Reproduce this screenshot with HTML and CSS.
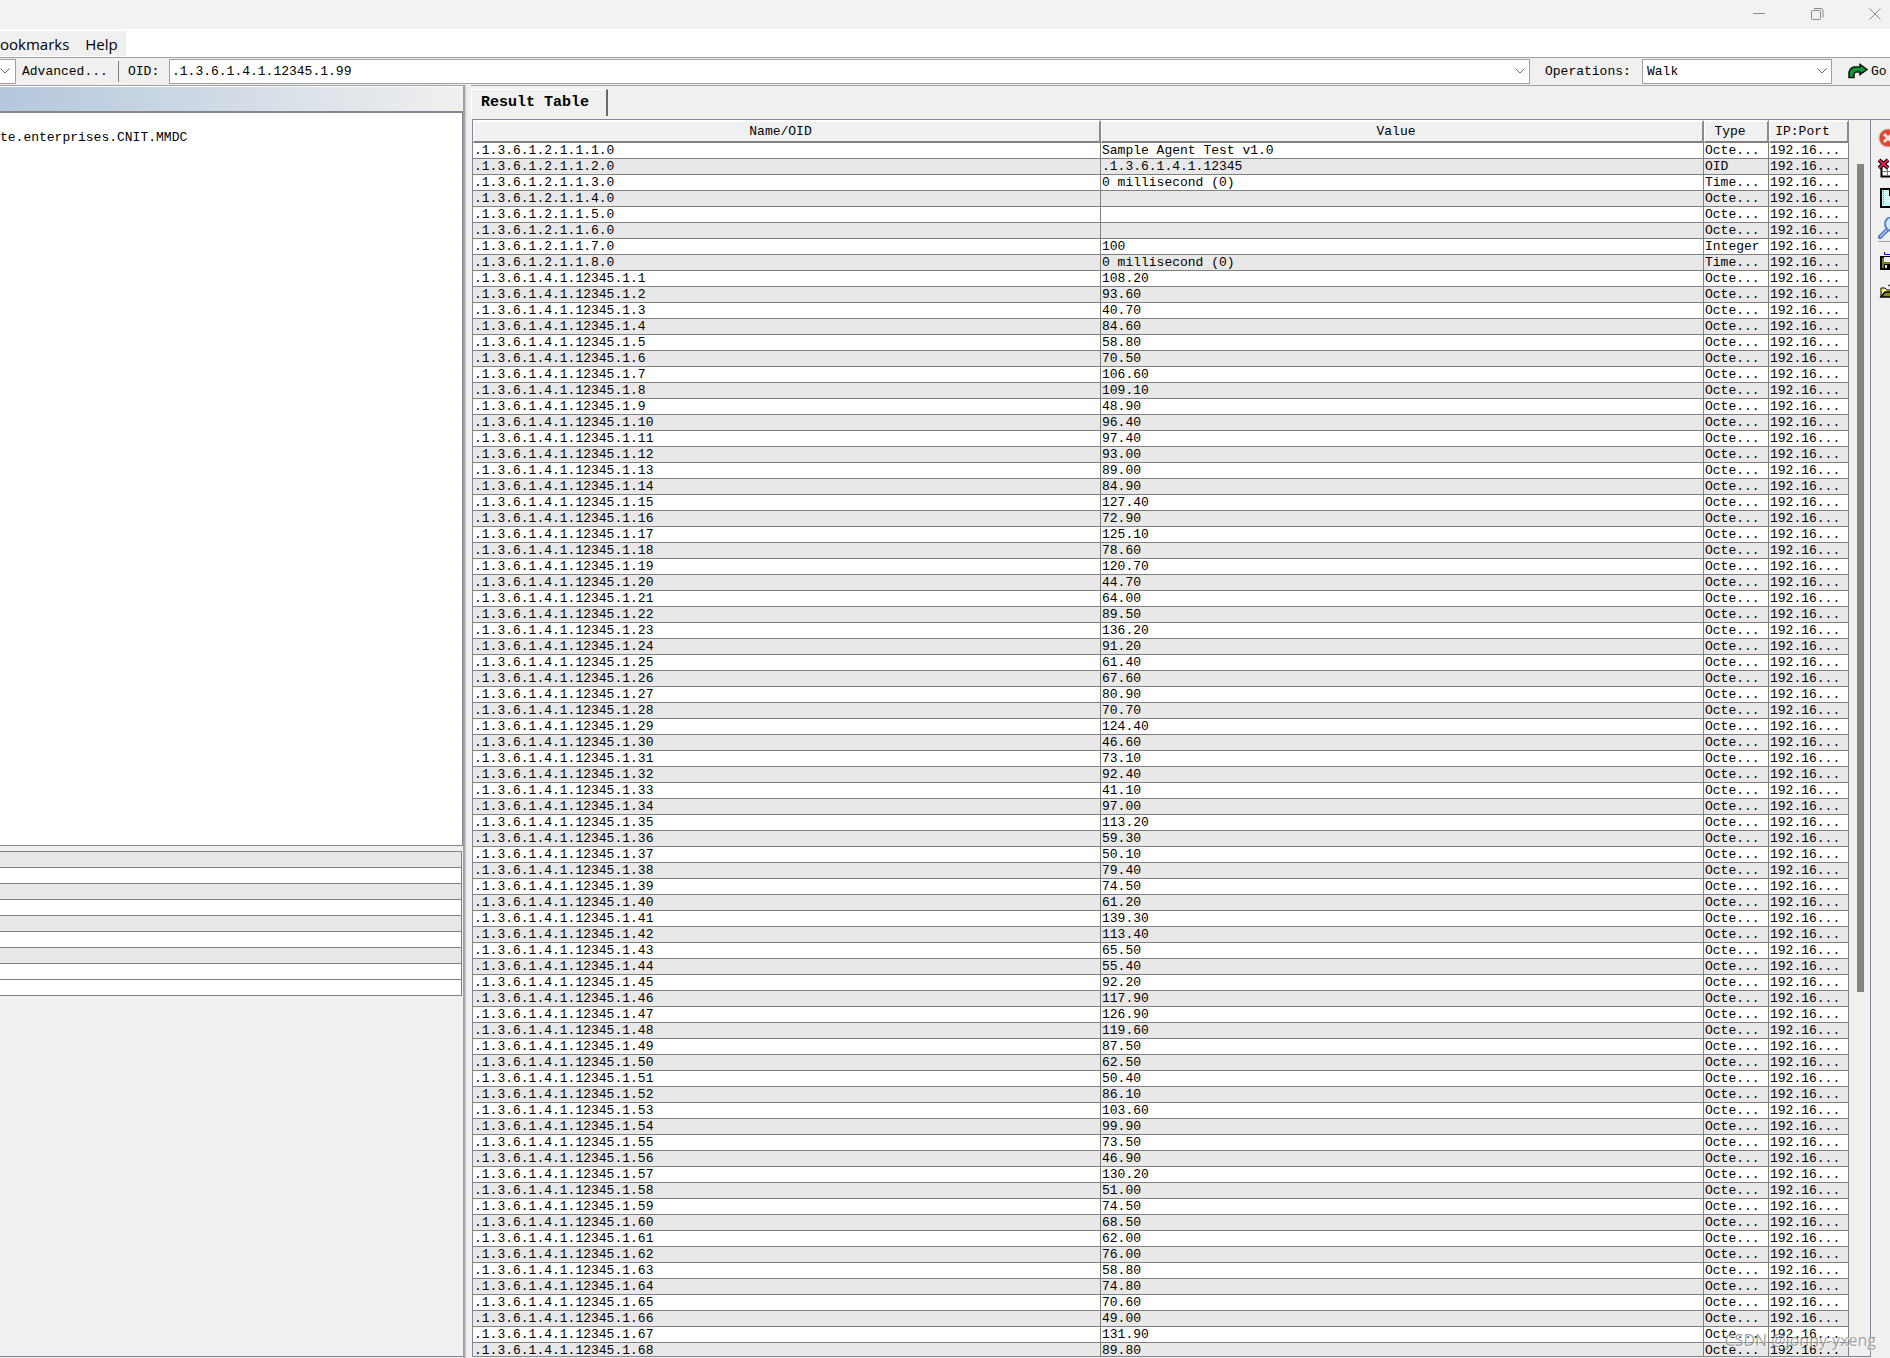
FILE: index.html
```html
<!DOCTYPE html>
<html lang="en">
<head>
<meta charset="utf-8">
<title>MIB Browser</title>
<link rel="stylesheet" href="styles.css">
</head>
<body>
<header class="titlebar">
  <button class="winbtn" aria-label="Minimize"><svg width="14" height="14" viewBox="0 0 14 14"><path d="M1 6.5h12" /></svg></button>
  <button class="winbtn" aria-label="Restore"><svg width="14" height="14" viewBox="0 0 14 14"><rect x="1.5" y="3.5" width="9" height="9" rx="1"/><path d="M4 1.5h7a2 2 0 0 1 2 2v7"/></svg></button>
  <button class="winbtn" aria-label="Close"><svg width="14" height="14" viewBox="0 0 14 14"><path d="M1.5 1.5l11 11M12.5 1.5l-11 11"/></svg></button>
</header>
<nav class="menubar"><div class="menus"><button class="menu">ookmarks</button><button class="menu">Help</button></div></nav>
<div class="toolbar">
  <button class="drop" aria-label="Address list"><svg class="chev" width="10" height="6" viewBox="0 0 10 6"><path d="M.5.5L5 5 9.5.5"/></svg></button>
  <button class="tool advanced">Advanced...</button>
  <span class="sep"></span>
  <label class="oid-label" for="oid">OID:</label>
  <div class="field grow"><input id="oid" type="text" value=".1.3.6.1.4.1.12345.1.99"><svg class="chev" width="10" height="6" viewBox="0 0 10 6"><path d="M.5.5L5 5 9.5.5"/></svg></div>
  <label class="ops-label" for="ops">Operations:</label>
  <div class="field ops"><select id="ops"><option>Walk</option></select><svg class="chev" width="10" height="6" viewBox="0 0 10 6"><path d="M.5.5L5 5 9.5.5"/></svg></div>
  <button class="tool go"><svg width="20" height="16" viewBox="0 0 20 16"><path d="M1 14.5V9.500Q2 5 6 4h6V1.500l7 5-7 5V9H8Q6 9.500 6 11.500v3z" fill="#0a9a32" stroke="#111" stroke-width="1.500"/></svg>Go</button>
</div>
<main class="work">
  <section class="left">
    <div class="tree-head"></div>
    <div class="tree">te.enterprises.CNIT.MMDC</div>
    <div class="gap"></div>
    <table class="props" aria-label="Node properties"><tbody id="props"></tbody></table>
    <div class="rest"></div>
  </section>
  <div class="splitter"></div>
  <section class="right">
    <div class="tabs"><button class="tab">Result Table</button></div>
    <div class="result">
      <div class="scroll">
        <table class="grid">
          <colgroup><col><col class="c-value"><col class="c-type"><col class="c-ip"></colgroup>
          <thead><tr><th>Name/OID</th><th>Value</th><th>Type</th><th>IP:Port</th></tr></thead>
          <tbody id="rows"></tbody>
        </table>
        <div class="track"><div class="thumb"></div></div>
      </div>
      <aside class="side">
        <button aria-label="Stop"><svg width="20" height="20" viewBox="0 0 20 20"><circle cx="10" cy="10" r="9" fill="#e2452f" stroke="#c9b5b0"/><path d="M6 6l8 8M14 6l-8 8" stroke="#f4e4e0" stroke-width="3"/></svg></button>
        <button aria-label="Clear table"><svg width="20" height="20" viewBox="0 0 20 20"><path d="M3.500 9v9.500h16V5" fill="#fff" stroke="#000" stroke-width="2"/><path d="M4 13.500h16M9.500 9v9" stroke="#777"/><path d="M1 2l9 8M10 2l-9 8" stroke="#000" stroke-width="4"/><path d="M1 2l9 8M10 2l-9 8" stroke="#e0204f" stroke-width="2"/></svg></button>
        <button aria-label="Log"><svg width="20" height="20" viewBox="0 0 20 20"><path d="M3 1h9v6h8v12H3z" fill="#c4f4f6" stroke="#000" stroke-width="2"/><path d="M5.500 3v14" stroke="#e66" stroke-dasharray="1 1"/><path d="M7 5h4M7 9h11M7 13h11" stroke="#fff"/></svg></button>
        <button aria-label="Find"><svg width="20" height="22" viewBox="0 0 20 22"><path d="M2 20l7-7" stroke="#3f66b8" stroke-width="4" stroke-linecap="round"/><path d="M2 20l7-7" stroke="#9cbcf0" stroke-width="2"/><circle cx="14" cy="7" r="7" fill="#d4ecff" stroke="#5a83d0" stroke-width="2"/></svg></button>
        <hr>
        <button aria-label="Save"><svg width="20" height="18" viewBox="0 0 20 18"><path d="M6.500 0v2.500H20" fill="none" stroke="#00f"/><path d="M3 5h14v12H3z" fill="#7d7d18" stroke="#000" stroke-width="2"/><path d="M6 5h6v5H6z" fill="#eee"/><path d="M6 12h6v5H6z" fill="#000"/><path d="M7 13h2v3H7z" fill="#ddd"/></svg></button>
        <button aria-label="Open"><svg width="20" height="16" viewBox="0 0 20 16"><path d="M3 14V5h4l2 2h9" fill="#ffff7a" stroke="#000"/><path d="M3 14l4-5h13v5z" fill="#8a8a1a" stroke="#000" stroke-width="1.500"/><path d="M10 3l3-2" stroke="#000"/></svg></button>
      </aside>
    </div>
  </section>
</main>
<div class="watermark">CSDN @jonny-yxeng</div>
<script src="rows.js"></script>
</body>
</html>
```
FILE: styles.css
```css
* { box-sizing: border-box; }
body {
  margin: 0;
  height: 100vh;
  overflow: hidden;
  display: flex;
  flex-direction: column;
  background: #f0f0f0;
  color: #000;
  font: 13px/15px "Liberation Mono", monospace;
}
button, input, select { font: inherit; color: inherit; margin: 0; padding: 0; border: 0; background: none; border-radius: 0; }
svg { display: block; fill: none; flex: none; }
.titlebar { height: 29px; background: #f2f2f2; display: flex; justify-content: flex-end; gap: 44px; padding: 0 8px 2px 0; }
.winbtn { display: flex; align-items: center; }
.winbtn svg { stroke: #888; }
.menubar { height: 29px; background: #fff; border-bottom: 1px solid #a0a0a0; padding: 2px 0 1px; }
.menus { display: inline-flex; height: 25px; gap: 16px; background: #f0f0f0; padding-right: 8px; }
.menu { font: 15px/24px "Open Sans", sans-serif; }
.toolbar { height: 27px; display: flex; align-items: center; padding-bottom: 1px; }
.chev { stroke: #666; }
.drop { width: 16px; height: 25px; background: #fff; border: 1px solid #a0a0a0; border-left: 0; display: flex; align-items: center; }
.advanced { width: 102px; text-align: left; padding-left: 6px; }
.sep { width: 1px; height: 21px; background: #808080; }
.oid-label { width: 50px; padding-left: 9px; }
.field { height: 25px; display: flex; align-items: center; background: #fff; border: 1px solid #a0a0a0; padding-right: 4px; }
.field input, .field select { flex: 1; min-width: 0; height: 100%; appearance: none; outline: 0; }
.field input { padding-left: 2px; }
.field select { padding-left: 4px; }
.grow { flex: 1; }
.ops-label { width: 112px; padding-left: 15px; }
.ops { width: 190px; }
.go { width: 58px; padding-left: 16px; display: flex; align-items: center; gap: 3px; }
.work { flex: 1; min-height: 0; display: flex; }
.left { width: 463px; display: flex; flex-direction: column; border-top: 1px solid #a0a0a0; border-bottom: 1px solid #828790; margin-bottom: 1px; }
.tree-head { height: 25px; border-top: 1px solid #fff; background: linear-gradient(90deg, #b4c7dc, #f0f0f0); flex: none; }
.tree { flex: 3; background: #fff; border: solid #828790; border-width: 2px 1px 1px 0; padding-top: 17px; }
.gap { height: 5px; flex: none; }
.props { width: 462px; border-collapse: collapse; border: solid #808080; border-width: 1px 1px 0 0; flex: none; }
.props td { height: 16px; padding: 0; background: #fff; border-bottom: 1px solid #808080; }
.props tr:nth-child(odd):not(:last-child) td { background: #e8e8e8; }
.rest { height: 360px; flex: none; }
.splitter { width: 8px; border-left: 2px solid #a0a0a0; background: linear-gradient(90deg, #d4d4d4 1px, #f0f0f0 2px); }
.right { flex: 1; min-width: 0; display: flex; flex-direction: column; padding-top: 3px; border-top: 1px solid #a0a0a0; }
.tabs { height: 30px; flex: none; }
.tab { height: 27px; width: 137px; border: 1px solid #fff; border-bottom: 0; border-right: 2px solid #696969; border-radius: 2px 0 0 0; font: bold 15px/24px "Liberation Mono", monospace; padding-right: 8px; }
.result { flex: 1; min-height: 0; display: flex; margin-left: 1px; border-top: 1px solid #828790; }
.scroll { flex: 1; min-width: 0; display: flex; overflow: hidden; border: solid #828790; border-width: 0 1px 1px; margin-bottom: 1px; }
.grid { flex: 1; align-self: flex-start; table-layout: fixed; border-collapse: separate; border-spacing: 0; }
.c-value { width: 603px; }
.c-type { width: 65px; }
.c-ip { width: 80px; }
.grid th { height: 23px; padding: 0 12px 0 0; font-weight: normal; background: #f0f0f0; border: solid; border-width: 2px 2px 2px 1px; border-color: #fff #8a8a8a #808080 #fff; }
.grid td { height: 16px; padding: 0 0 0 1px; border: solid #808080; border-width: 0 1px 1px 0; background: #fff; white-space: nowrap; overflow: hidden; }
.grid tr:nth-child(even) td { background: #e8e8e8; }
.track { width: 21px; flex: none; padding: 44px 6px 0 8px; }
.thumb { height: 828px; background: #858585; }
.side { width: 19px; overflow: hidden; display: flex; flex-direction: column; padding: 3px 0 0 7px; }
.side button { height: 30px; flex: none; display: flex; align-items: center; }
.side hr { width: 100%; margin: -2px 0 4px; border: 0; border-top: 1px solid #a0a0a0; }
.watermark { position: absolute; right: 14px; bottom: 6px; font: 16px/24px "Open Sans", sans-serif; color: #8a8a8acc; text-shadow: 1px 1px #fffc; }
```
FILE: rows.js
```js
const system = [
  ["Sample Agent Test v1.0", "Octe..."], [".1.3.6.1.4.1.12345", "OID"], ["0 millisecond (0)", "Time..."],
  ["", "Octe..."], ["", "Octe..."], ["", "Octe..."], ["100", "Integer"], ["0 millisecond (0)", "Time..."]
];
const readings = `108.20 93.60 40.70 84.60 58.80 70.50 106.60 109.10 48.90 96.40 97.40 93.00 89.00 84.90 127.40 72.90 125.10
78.60 120.70 44.70 64.00 89.50 136.20 91.20 61.40 67.60 80.90 70.70 124.40 46.60 73.10 92.40 41.10 97.00 113.20 59.30
50.10 79.40 74.50 61.20 139.30 113.40 65.50 55.40 92.20 117.90 126.90 119.60 87.50 62.50 50.40 86.10 103.60 99.90 73.50
46.90 130.20 51.00 74.50 68.50 62.00 76.00 58.80 74.80 70.60 49.00 131.90 89.80`.split(/\s+/);
const data = system.map(([value, type], i) => [`.1.3.6.1.2.1.1.${i + 1}.0`, value, type])
  .concat(readings.map((value, i) => [`.1.3.6.1.4.1.12345.1.${i + 1}`, value, "Octe..."]));
const body = document.getElementById("rows");
for (const row of data) {
  const tr = body.insertRow();
  for (const text of [...row, "192.16..."]) tr.insertCell().textContent = text;
}
const props = document.getElementById("props");
for (let i = 0; i < 9; i++) props.insertRow().insertCell();
```
